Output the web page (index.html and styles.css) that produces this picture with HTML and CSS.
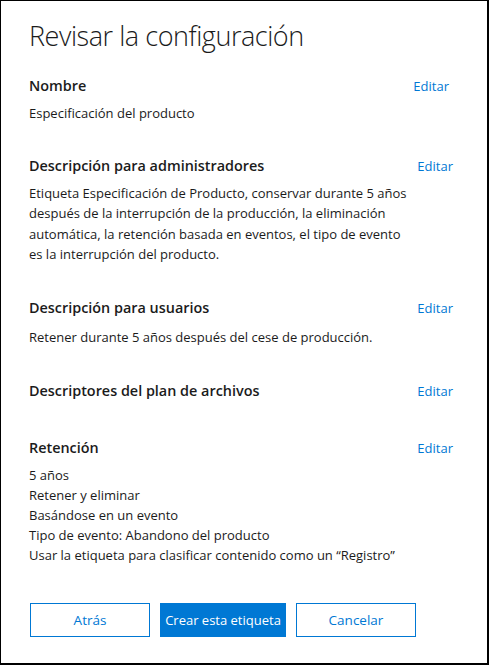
FILE: index.html
```html
<!DOCTYPE html>
<html lang="es">
<head>
<meta charset="utf-8">
<title>Revisar la configuración</title>
<link rel="stylesheet" href="styles.css">
</head>
<body>
<div class="frame">
  <h1 class="title">Revisar la configuración</h1>

  <section class="section section-first">
    <div class="section-head">
      <h2 class="section-title">Nombre</h2>
      <a class="edit edit-inset" href="#">Editar</a>
    </div>
    <div class="section-body">Especificación del producto</div>
  </section>

  <section class="section">
    <div class="section-head">
      <h2 class="section-title">Descripción para administradores</h2>
      <a class="edit" href="#">Editar</a>
    </div>
    <div class="section-body narrow">Etiqueta Especificación de Producto, conservar durante 5 años después de la interrupción de la producción, la eliminación automática, la retención basada en eventos, el tipo de evento es la interrupción del producto.</div>
  </section>

  <section class="section section-users">
    <div class="section-head">
      <h2 class="section-title">Descripción para usuarios</h2>
      <a class="edit" href="#">Editar</a>
    </div>
    <div class="section-body">Retener durante 5 años después del cese de producción.</div>
  </section>

  <section class="section section-empty">
    <div class="section-head">
      <h2 class="section-title">Descriptores del plan de archivos</h2>
      <a class="edit" href="#">Editar</a>
    </div>
  </section>

  <section class="section section-retention">
    <div class="section-head">
      <h2 class="section-title">Retención</h2>
      <a class="edit" href="#">Editar</a>
    </div>
    <div class="section-body">
      <div>5 años</div>
      <div>Retener y eliminar</div>
      <div>Basándose en un evento</div>
      <div>Tipo de evento: Abandono del producto</div>
      <div>Usar la etiqueta para clasificar contenido como un “Registro”</div>
    </div>
  </section>

  <div class="actions">
    <button class="btn btn-default" type="button">Atrás</button>
    <button class="btn btn-primary" type="button">Crear esta etiqueta</button>
    <button class="btn btn-default" type="button">Cancelar</button>
  </div>
</div>
</body>
</html>
```

FILE: styles.css
```css
* { box-sizing: border-box; }
html, body { margin: 0; padding: 0; background: #fff; }
body {
  font-family: "Open Sans", "Noto Sans", sans-serif;
  color: #1b1b1b;
}
.frame {
  width: 489px;
  height: 665px;
  overflow: hidden;
  border: 1px solid #000;
  border-right-width: 2px;
  border-bottom-width: 2px;
  padding: 17px 34px 0 28px;
}
.title {
  margin: 0;
  font-size: 27px;
  line-height: 36px;
  font-weight: 300;
  letter-spacing: -0.45px;
}
.section { margin-top: 32px; }
.section-first { margin-top: 21px; }
.section-users { margin-top: 33px; }
.section-empty { margin-top: 33px; }
.section-retention { margin-top: 35px; }
.section-head {
  display: flex;
  justify-content: space-between;
  align-items: baseline;
}
.section-title {
  margin: 0;
  font-size: 14.4px;
  line-height: 22px;
  font-weight: 600;
}
.edit {
  font-size: 13px;
  line-height: 22px;
  color: #0078d4;
  text-decoration: none;
}
.edit-inset { margin-right: 4px; }
.section-body {
  margin-top: 6px;
  font-size: 13px;
  line-height: 20px;
}
.section-users .section-body { margin-top: 8px; }
.narrow { max-width: 382px; line-height: 20.3px; }
.actions {
  margin-top: 38px;
  display: flex;
  gap: 10px;
  padding-left: 1px;
}
.btn {
  height: 34px;
  width: 120px;
  flex-shrink: 0;
  font-family: inherit;
  font-size: 13.5px;
  white-space: nowrap;
  padding: 0;
  border: 1px solid #0078d4;
  cursor: pointer;
}
.btn-default { background: #fff; color: #0078d4; }
.btn-primary { background: #0078d4; color: #fff; width: 126px; font-size: 13px; }
```
